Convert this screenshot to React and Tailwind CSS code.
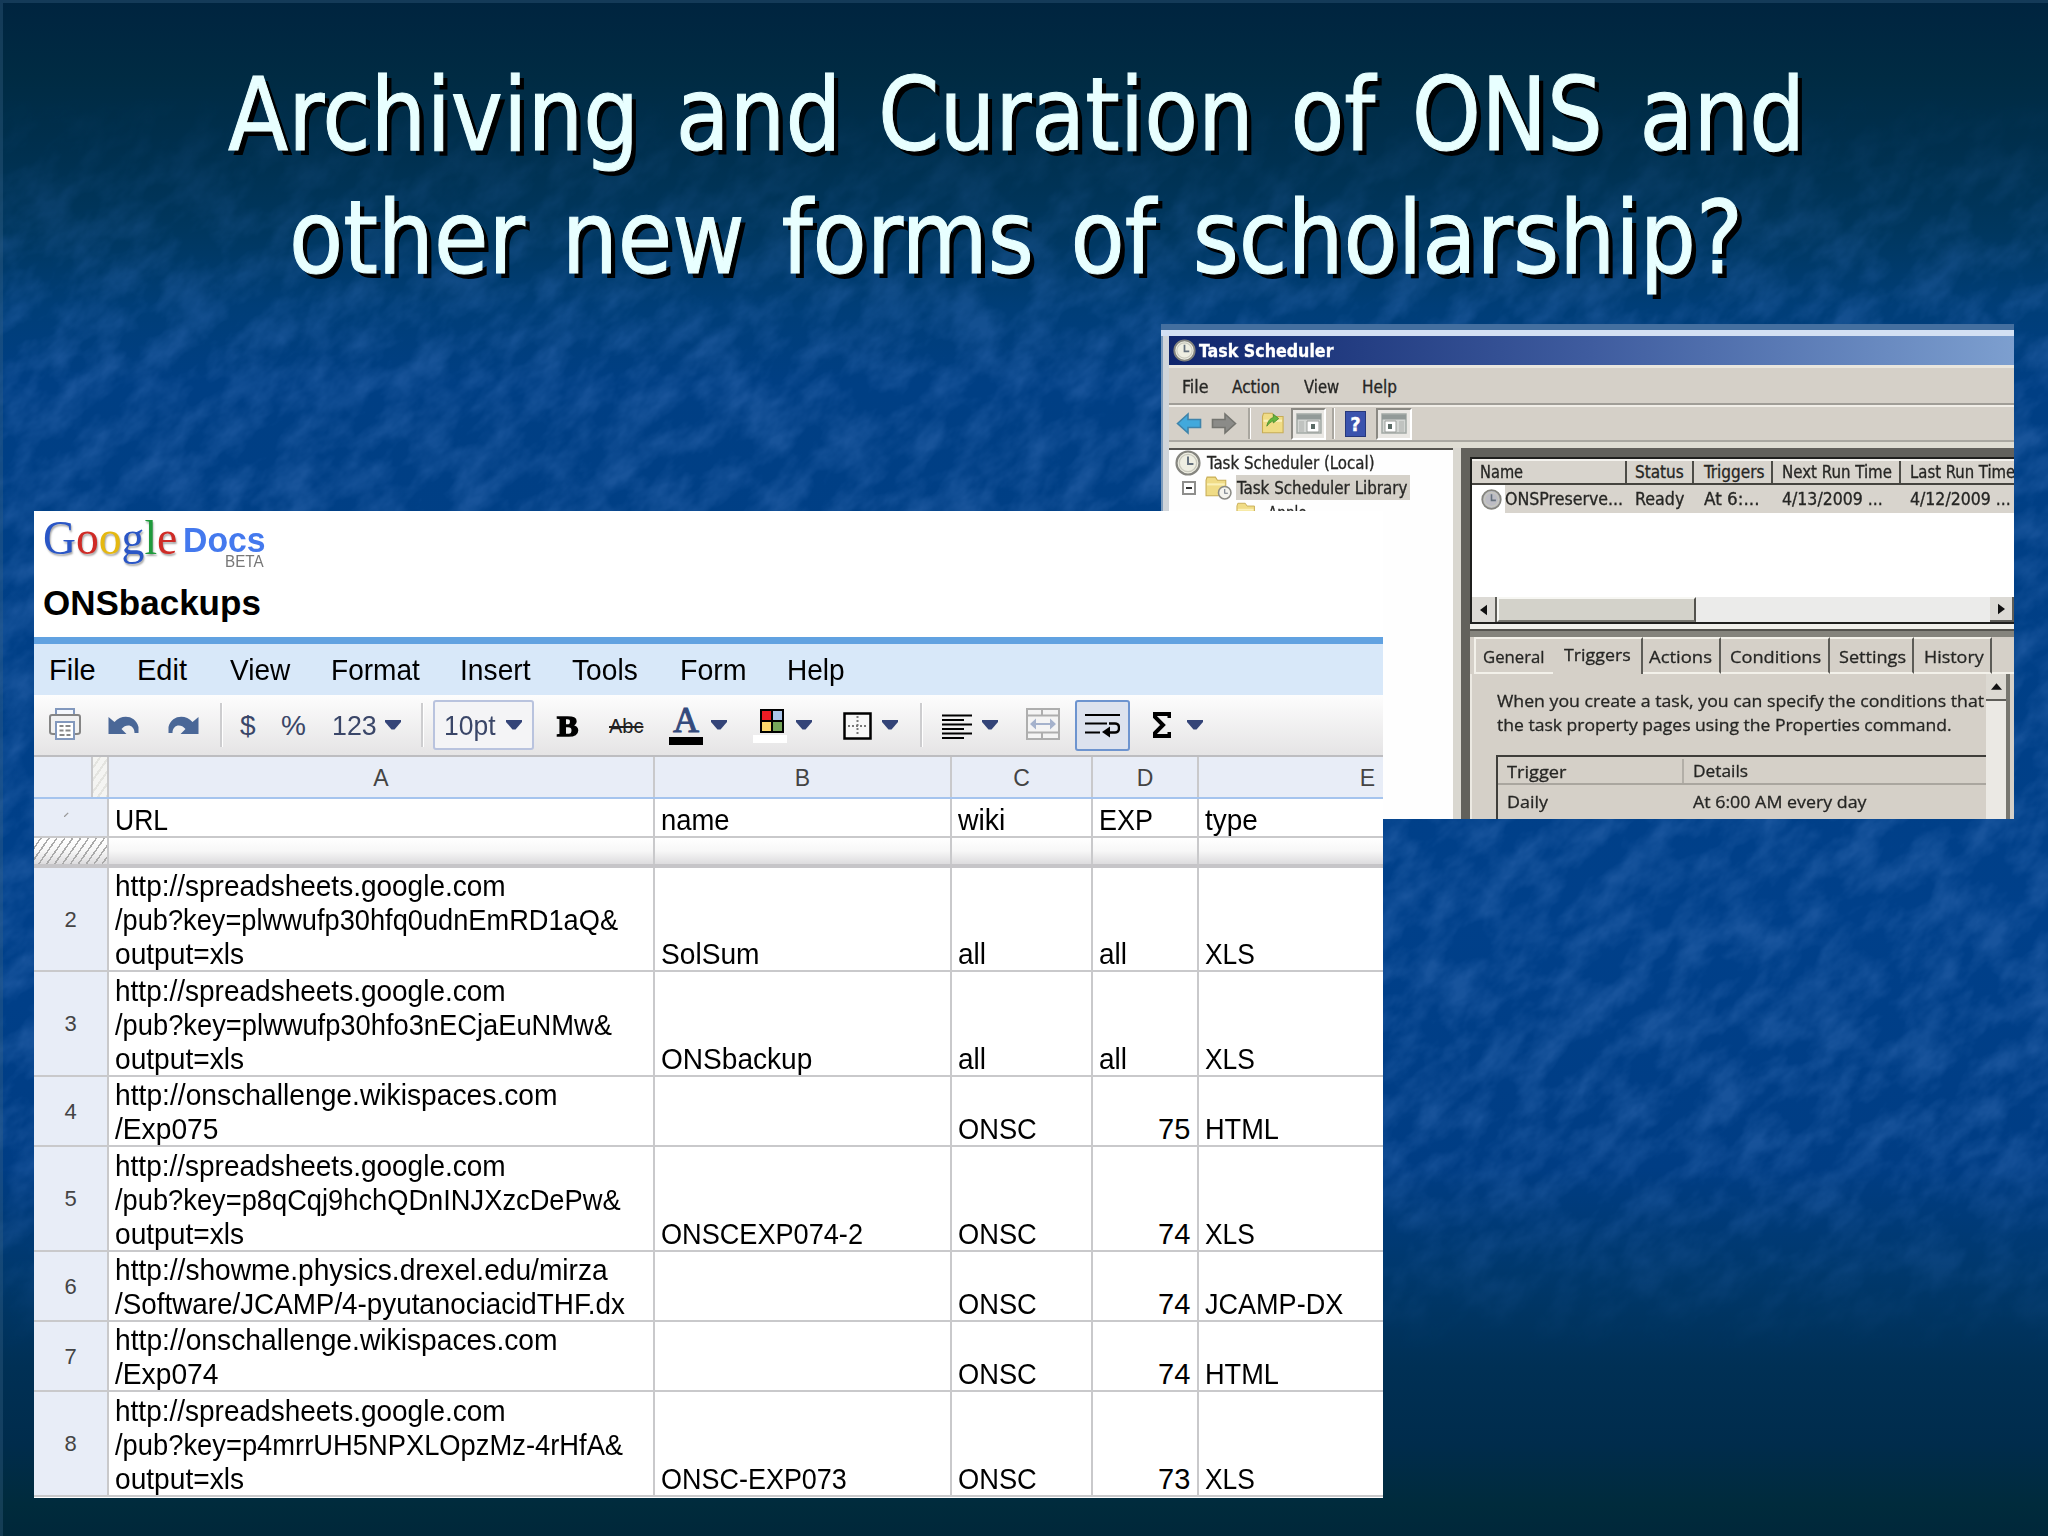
import React, { useState, useRef, useLayoutEffect } from 'react';

// Stretches one line of text to an exact width
const Fit = ({ w, className = '', children }) => {
    const ref = useRef(null);
    const [scale, setScale] = useState(1);

    useLayoutEffect(() => {
        const natural = ref.current.offsetWidth;
        if (natural > 0) setScale(w / natural);
    }, [w]);

    return (
        <span className="block shrink-0 whitespace-nowrap" style={{ width: w }}>
            <span ref={ref} className={`inline-block origin-left whitespace-pre ${className}`} style={{ transform: `scaleX(${scale})` }}>
                {children}
            </span>
        </span>
    );
};

const Water = () => (
    <svg className="absolute inset-0 w-full h-full" viewBox="0 0 2048 1536" preserveAspectRatio="none">
        <defs>
            <linearGradient id="depth" x1="0" y1="0" x2="0" y2="1">
                <stop offset="0" stopColor="#00243f" />
                <stop offset="0.05" stopColor="#002b43" />
                <stop offset="0.1" stopColor="#00304f" />
                <stop offset="0.15" stopColor="#00375f" />
                <stop offset="0.2" stopColor="#003e78" />
                <stop offset="0.25" stopColor="#003f84" />
                <stop offset="0.6" stopColor="#00408a" />
                <stop offset="0.76" stopColor="#003d84" />
                <stop offset="0.83" stopColor="#00386c" />
                <stop offset="0.89" stopColor="#003055" />
                <stop offset="0.94" stopColor="#002c4c" />
                <stop offset="0.98" stopColor="#002b3c" />
                <stop offset="1" stopColor="#00273a" />
            </linearGradient>
            <linearGradient id="fade" x1="0" y1="0" x2="0" y2="1">
                <stop offset="0.06" stopColor="#000" />
                <stop offset="0.24" stopColor="#fff" />
                <stop offset="0.74" stopColor="#fff" />
                <stop offset="0.88" stopColor="#000" />
            </linearGradient>
            <mask id="fadeMask">
                <rect width="2048" height="1536" fill="url(#fade)" />
            </mask>
            <filter id="ripple" x="0" y="0" width="100%" height="100%" colorInterpolationFilters="sRGB">
                <feTurbulence type="fractalNoise" baseFrequency="0.023 0.038" numOctaves="4" seed="11" />
                <feColorMatrix values="0 0 0 0 0.2  0 0 0 0 0.42  0 0 0 0 0.7  2.2 0 0 0 -0.78" />
            </filter>
        </defs>
        <rect width="2048" height="1536" fill="url(#depth)" />
        <g mask="url(#fadeMask)" opacity="0.48">
            <g transform="rotate(-42 1024 768)">
                <rect x="-400" y="-500" width="2850" height="2550" filter="url(#ripple)" />
            </g>
        </g>
        <path d="M0 1.5H2048M1.5 0V1536" stroke="#3a6488" strokeOpacity="0.35" strokeWidth="3" />
    </svg>
);

const Clock = ({ className, face = '#eeeee2' }) => (
    <svg viewBox="0 0 24 24" className={`shrink-0 ${className}`}>
        <circle cx="12" cy="12" r="10.6" fill={face} stroke="#85857f" strokeWidth="2" />
        <circle cx="12" cy="12" r="8" fill="none" stroke="#c9c9bd" strokeWidth="1.2" />
        <path d="M12 6v7h5" fill="none" stroke="#64707c" strokeWidth="1.8" />
    </svg>
);

const Folder = ({ className, children }) => (
    <svg viewBox="0 0 26 24" className={`shrink-0 ${className}`}>
        <path d="M1 5l1-3h8l2 3h8v15H1z" fill="#f0dc86" stroke="#c8ad55" />
        <path d="M2 9h17" stroke="#fbf1b8" strokeWidth="2" />
        {children}
    </svg>
);

const Arrow = ({ className, fill, stroke }) => (
    <svg viewBox="0 0 26 22" className={`shrink-0 ${className}`}>
        <path d="M1.5 11L12 1.5V7h12.500v8H12v5.500z" fill={fill} stroke={stroke} strokeWidth="1.6" />
    </svg>
);

// Window thumbnail used by the two toggled toolbar buttons
const PaneIcon = ({ flip }) => (
    <svg viewBox="0 0 26 21" className="w-[26px] h-[21px]">
        <path d="M1 1h24v19H1z" fill="#d3d6d3" stroke="#a3a9a5" strokeWidth="1.5" />
        <path d="M1 4h24" stroke="#929a98" strokeWidth="5" />
        <path d={flip ? 'M18 8h5v11h-5z' : 'M3 8h5v11H3z'} fill="#c0c3c0" />
        <path d={flip ? 'M4 8h11v11H4z' : 'M11 8h12v11H11z'} fill="#fff" stroke="#9a9e9a" />
        <path d={flip ? 'M7 11h4v5H7z' : 'M15 11h4v5h-4z'} fill="#5b6b66" />
    </svg>
);

const taskMenu = [
    { label: 'File', w: 26, cls: 'w-[50px]' },
    { label: 'Action', w: 48, cls: 'w-[72px]' },
    { label: 'View', w: 35, cls: 'w-[58px]' },
    { label: 'Help', w: 35, cls: 'w-[60px]' },
];

const taskCols = [
    { head: 'Name', hw: 43, cell: 'ONSPreserve...', cw: 118, cls: 'w-[155px] pl-[8px]' },
    { head: 'Status', hw: 49, cell: 'Ready', cw: 49, cls: 'w-[67px] pl-[8px]' },
    { head: 'Triggers', hw: 60, cell: 'At 6:...', cw: 55, cls: 'w-[79px] pl-[10px]' },
    { head: 'Next Run Time', hw: 110, cell: '4/13/2009 ...', cw: 101, cls: 'w-[128px] pl-[9px]' },
    { head: 'Last Run Time', hw: 105, cell: '4/12/2009 ...', cw: 101, cls: 'w-[128px] pl-[9px]' },
];

const tabs = [
    { label: 'General', w: 62, cls: 'w-[79px] pl-[7px] border-l-2 border-l-[#f3f1ea]' },
    { label: 'Triggers', w: 67, cls: 'w-[90px] pl-[11px] pb-[6px] border-r-2 border-r-[#5c5b56]', active: true },
    { label: 'Actions', w: 63, cls: 'w-[78px] pl-[6px] border-r-2 border-r-[#5c5b56]' },
    { label: 'Conditions', w: 91, cls: 'w-[109px] pl-[9px] border-r-2 border-r-[#5c5b56]' },
    { label: 'Settings', w: 67, cls: 'w-[84px] pl-[9px] border-r-2 border-r-[#5c5b56]' },
    { label: 'History', w: 60, cls: 'w-[78px] pl-[10px] border-r-2 border-r-[#5c5b56]' },
];

const TaskScheduler = () => (
    <div className="absolute left-[1161px] top-[324px] w-[853px] h-[495px] overflow-hidden flex flex-col bg-[#d5d0c8] text-[17px] leading-[22px] text-[#262624] font-['DejaVu_Sans_Condensed','DejaVu_Sans',sans-serif] [-webkit-text-stroke:0.3px_currentColor]">
        <div className="h-[6px] shrink-0 bg-[#446f9f]" />
        <div className="h-[6px] shrink-0 bg-[#d3e0f3]" />
        <div className="flex-1 flex min-h-0">
            <div className="w-[8px] shrink-0 bg-[#d0d5da] border-l-2 border-[#7f9dbd]" />
            <div className="w-[845px] shrink-0 flex flex-col">
                {/* Title bar */}
                <div className="h-[29px] shrink-0 flex items-center pl-[4px] bg-gradient-to-r from-[#10256c] via-[#3f5c9f] to-[#7d9fcf] text-white">
                    <Clock className="w-[23px] h-[23px]" />
                    <Fit w={135} className="ml-[3px] font-bold">Task Scheduler</Fit>
                </div>
                <div className="h-[3px] shrink-0 bg-[#e9e6de]" />
                <div className="h-[35px] shrink-0 flex items-center pl-[13px] pt-[2px]">
                    {taskMenu.map((m) => (
                        <div key={m.label} className={m.cls}><Fit w={m.w}>{m.label}</Fit></div>
                    ))}
                </div>
                <div className="h-[2px] shrink-0 bg-[#a09d97]" />
                <div className="h-[2px] shrink-0 bg-[#f1eee8]" />
                {/* Icon bar */}
                <div className="h-[33px] shrink-0 flex items-center pl-[7px]">
                    <Arrow className="w-[26px] h-[23px]" fill="#42a9dc" stroke="#3f84ab" />
                    <Arrow className="w-[26px] h-[23px] ml-[9px] -scale-x-100" fill="#8b8b88" stroke="#74746f" />
                    <div className="ml-[11px] w-[3px] h-[31px] bg-[#a9a69f] border-r border-white" />
                    <Folder className="w-[29px] h-[26px] ml-[10px]">
                        <path d="M5 14c1-5 3-7 6-8V3l5 4-5 4V9c-2 1-4 2-6 5z" fill="#64b53c" stroke="#4b8b2d" strokeWidth="0.8" />
                    </Folder>
                    <div className="ml-px w-[35px] h-[32px] flex items-center justify-center bg-[#eae8e4] border-2 border-t-[#8b8983] border-l-[#8b8983] border-b-white border-r-white">
                        <PaneIcon />
                    </div>
                    <div className="ml-[6px] w-[3px] h-[31px] bg-[#a9a69f] border-r border-white" />
                    <div className="ml-[10px] w-[21px] h-[26px] flex items-center justify-center bg-[#3b53ad] border border-[#27387b] text-white font-bold text-[20px]">?</div>
                    <div className="ml-[10px] w-[36px] h-[32px] flex items-center justify-center bg-[#eae8e4] border-2 border-t-[#8b8983] border-l-[#8b8983] border-b-white border-r-white">
                        <PaneIcon flip />
                    </div>
                </div>
                <div className="h-[2px] shrink-0 bg-[#aaa8a1]" />
                <div className="h-[6px] shrink-0 bg-[#dfddd3]" />

                <div className="flex-1 flex min-h-0">
                    {/* Task tree */}
                    <div className="w-[284px] shrink-0 bg-[#fefefe] border-t-2 border-[#55544f] overflow-hidden">
                        <div className="h-[25px] flex items-center pl-[6px]">
                            <Clock className="w-[26px] h-[26px]" />
                            <Fit w={168} className="ml-[6px]">Task Scheduler (Local)</Fit>
                        </div>
                        <div className="h-[25px] flex items-center pl-[13px]">
                            <div className="w-[14px] h-[14px] border-2 border-[#8e8e8c] flex items-center justify-center">
                                <div className="w-[6px] h-[2px] bg-[#333]" />
                            </div>
                            <Folder className="ml-[9px] w-[27px] h-[25px]">
                                <circle cx="19" cy="17" r="6" fill="#f4f4ee" stroke="#8a8a84" strokeWidth="1.5" />
                                <path d="M19 13.500V17.500h3" fill="none" stroke="#6b7480" />
                            </Folder>
                            <div className="ml-[4px] w-[174px] h-[25px] bg-[#d5d1c9] flex items-center">
                                <Fit w={170} className="ml-px">Task Scheduler Library</Fit>
                            </div>
                        </div>
                        <div className="h-[25px] flex items-center pl-[67px]">
                            <Folder className="w-[24px] h-[23px]" />
                            <Fit w={39} className="ml-[8px]">Apple</Fit>
                        </div>
                    </div>
                    <div className="w-[8px] shrink-0 bg-[#d9d7d0]" />
                    <div className="w-[9px] shrink-0 bg-[#62615c]" />

                    <div className="w-[544px] shrink-0 flex flex-col">
                        <div className="h-[11px] shrink-0 bg-[#62615c] border-b-2 border-[#1f1f1d]" />
                        {/* Task list */}
                        <div className="h-[165px] shrink-0 bg-white border-l-2 border-b-2 border-[#1f1f1d] flex flex-col">
                            <div className="h-[26px] shrink-0 flex bg-[#d8d4cd] border-t-2 border-t-[#f4f2ee] border-b-2 border-b-[#45443f]">
                                {taskCols.map((c) => (
                                    <div key={c.head} className={`shrink-0 border-r-2 border-[#4d4c47] ${c.cls}`}>
                                        <Fit w={c.hw}>{c.head}</Fit>
                                    </div>
                                ))}
                            </div>
                            <div className="h-[28px] shrink-0 flex items-center bg-[#d8d4cd]">
                                {taskCols.map((c, i) => (
                                    <div key={c.head} className={`h-full shrink-0 flex items-center ${i === 0 ? 'w-[155px]' : c.cls}`}>
                                        {i === 0 && (
                                            <div className="w-[33px] h-full bg-white flex items-center pl-[9px]">
                                                <Clock className="w-[21px] h-[21px]" face="#bcbcc4" />
                                            </div>
                                        )}
                                        <Fit w={c.cw}>{c.cell}</Fit>
                                    </div>
                                ))}
                            </div>
                            <div className="flex-1" />
                            <div className="h-[25px] shrink-0 flex bg-[#ebebea]">
                                <div className="w-[25px] shrink-0 flex items-center justify-center bg-[#dcdad5] border-r-2 border-[#5e5d58]">
                                    <svg viewBox="0 0 8 12" className="w-[7px] h-[12px]"><path d="M8 0v12L0 6z" fill="#111" /></svg>
                                </div>
                                <div className="w-[199px] shrink-0 bg-[#d3d2ca] border-2 border-l-[#f7f7f3] border-t-[#f7f7f3] border-r-[#53524d] border-b-[#77766f]" />
                                <div className="flex-1" />
                                <div className="w-[24px] shrink-0 flex items-center justify-center bg-[#dcdad5] border-r-2 border-b-2 border-[#5e5d58]">
                                    <svg viewBox="0 0 8 12" className="w-[7px] h-[12px]"><path d="M0 0v12l8-6z" fill="#111" /></svg>
                                </div>
                            </div>
                        </div>
                        <div className="h-[5px] shrink-0 bg-[#f1f0eb]" />
                        <div className="h-[8px] shrink-0 bg-[#85847d] border-t-2 border-[#55544f]" />
                        {/* Tabs */}
                        <div className="h-[37px] shrink-0 pl-[4px] flex font-['Open_Sans','Noto_Sans',sans-serif]">
                            {tabs.map((t) => (
                                <div key={t.label} className={`shrink-0 flex items-center pt-[3px] border-t-2 border-t-[#f3f1ea] ${t.cls} ${t.active ? '' : 'border-b-2 border-b-[#f3f1ea]'}`}>
                                    <Fit w={t.w}>{t.label}</Fit>
                                </div>
                            ))}
                            <div className="flex-1 border-b-2 border-[#f3f1ea]" />
                        </div>
                        <div className="flex-1 flex min-h-0 border-l-2 border-[#ece9e2] font-['Open_Sans','Noto_Sans',sans-serif]">
                            <div className="w-[514px] shrink-0 pl-[24px] pt-[15px] overflow-hidden">
                                <Fit w={487} className="ml-px leading-[24px]">When you create a task, you can specify the conditions that</Fit>
                                <Fit w={455} className="ml-px leading-[24px]">the task property pages using the Properties command.</Fit>
                                <div className="mt-[18px] h-[80px] border-t-2 border-l-2 border-[#3f3e3a]">
                                    <div className="h-[28px] flex items-center pt-[2px] border-b-2 border-[#aaa69f]">
                                        <div className="w-[186px] h-[24px] pl-[9px] border-r-2 border-[#b2aea7]"><Fit w={60} className="leading-[25px]">Trigger</Fit></div>
                                        <Fit w={55} className="ml-[9px]">Details</Fit>
                                    </div>
                                    <div className="h-[32px] flex items-center pt-[2px] pl-[9px]">
                                        <div className="w-[186px]"><Fit w={41}>Daily</Fit></div>
                                        <Fit w={174}>At 6:00 AM every day</Fit>
                                    </div>
                                </div>
                            </div>
                            <div className="w-[24px] shrink-0 bg-[#ebe9e4] border-r-4 border-[#77766f]">
                                <div className="h-[27px] flex items-center justify-center bg-[#dcd9d2] border-b-2 border-[#5e5d58]">
                                    <svg viewBox="0 0 12 7" className="w-[11px] h-[7px]"><path d="M0 7h12L6 0z" fill="#111" /></svg>
                                </div>
                            </div>
                        </div>
                    </div>
                </div>
            </div>
        </div>
    </div>
);

const docsMenu = [
    { label: 'File', w: 47, cls: 'w-[88px]' },
    { label: 'Edit', w: 50, cls: 'w-[93px]' },
    { label: 'View', w: 60, cls: 'w-[101px]' },
    { label: 'Format', w: 89, cls: 'w-[129px]' },
    { label: 'Insert', w: 71, cls: 'w-[112px]' },
    { label: 'Tools', w: 66, cls: 'w-[108px]' },
    { label: 'Form', w: 67, cls: 'w-[107px]' },
    { label: 'Help', w: 58, cls: 'w-[80px]' },
];

const Caret = ({ className }) => (
    <svg viewBox="0 0 16 10" className={`shrink-0 w-[16px] h-[10px] ${className}`}>
        <path d="M0 0h16v2L9.500 9.500h-3L0 2z" fill="#344478" />
    </svg>
);

const Divider = ({ className }) => (
    <div className={`shrink-0 w-[3px] h-[44px] bg-[#cdcdcf] border-r border-white ${className}`} />
);

const Undo = ({ className }) => (
    <svg viewBox="0 0 30 19" className={`shrink-0 w-[31px] h-[19px] ${className}`}>
        <path d="M0 1l6 5c7-8 21-7 24 5v6h-4c0-8-8-10-13-4l5 5H0z" fill="#4a6797" />
    </svg>
);

const DocsToolbar = () => (
    <div className="h-[60px] shrink-0 flex items-center bg-gradient-to-b from-[#fdfdfd] to-[#e5e4e5] text-[28px] leading-[34px] text-[#3a4668]">
        <svg viewBox="0 0 32 32" className="shrink-0 ml-[15px] mb-[2px] w-[32px] h-[32px]">
            <path d="M7 8V1h18v7" fill="#f5f8fd" stroke="#8298bd" strokeWidth="2" />
            <path d="M1 9q0-2 2-2h26q2 0 2 2v15q0 2-3 2H4q-3 0-3-2z" fill="#f1f1f1" stroke="#858585" strokeWidth="2" />
            <path d="M7 14h18v17H7z" fill="#fff" stroke="#8298bd" strokeWidth="2" />
            <path d="M10.500 18h4m2 0h5M10.500 22.500h4m2 0h5M10.500 27h5m2 0h4" stroke="#888" strokeWidth="2" />
        </svg>
        <Undo className="ml-[27px]" />
        <Undo className="ml-[29px] -scale-x-100" />
        <Divider className="ml-[21px]" />
        <div className="w-[17px] shrink-0" />
        <Fit w={16} className="mt-[2px]">$</Fit>
        <div className="w-[25px] shrink-0" />
        <Fit w={25} className="mt-[2px]">%</Fit>
        <div className="w-[26px] shrink-0" />
        <Fit w={45} className="mt-[2px]">123</Fit>
        <Caret className="ml-[8px]" />
        <Divider className="ml-[20px]" />
        <div className="shrink-0 ml-[9px] w-[101px] h-[50px] flex items-center pl-[9px] rounded-[3px] border-2 border-[#b9c3de] bg-[#f4f4f6]">
            <Fit w={52} className="mt-[2px]">10pt</Fit>
            <Caret className="ml-[10px]" />
        </div>
        <div className="w-[23px] shrink-0" />
        <Fit w={21} className="mt-[2px] font-['Liberation_Serif',serif] font-bold text-[29px] text-black [-webkit-text-stroke:1.5px_black]">B</Fit>
        <div className="w-[31px] shrink-0" />
        <Fit w={34} className="mt-[2px] text-[20px] text-[#222] line-through decoration-2">Abc</Fit>
        <div className="shrink-0 ml-[26px] w-[34px] h-[42px] flex flex-col items-center">
            <span className="h-[33px] leading-[33px] text-[36px] font-['Liberation_Serif',serif] text-[#344a7c] [-webkit-text-stroke:1px_#344a7c]">A</span>
            <div className="w-[34px] h-[8px] bg-black" />
        </div>
        <Caret className="ml-[8px]" />
        <svg viewBox="0 0 34 34" className="shrink-0 ml-[26px] w-[34px] h-[34px] mt-[2px]">
            <path d="M7 0h24v24H7z" fill="#000" />
            <path d="M9 2h9v9H9z" fill="#ee1c24" />
            <path d="M20 2h9v9h-9z" fill="#abc6ea" />
            <path d="M9 13h9v9H9z" fill="#fdd96b" />
            <path d="M20 13h9v9h-9z" fill="#76a65a" />
            <path d="M0 26h34v8H0z" fill="#fff" />
        </svg>
        <Caret className="ml-[9px]" />
        <svg viewBox="0 0 29 28" className="shrink-0 ml-[31px] w-[29px] h-[28px] mt-[2px]">
            <path d="M1.500 1.500h26v25h-26z" fill="#f8f8f8" stroke="#000" strokeWidth="2.500" />
            <path d="M14.500 4v20M5 14h20" stroke="#777" strokeWidth="2" strokeDasharray="2 2" />
        </svg>
        <Caret className="ml-[10px]" />
        <Divider className="ml-[22px]" />
        <svg viewBox="0 0 30 25" className="shrink-0 ml-[19px] w-[30px] h-[25px] mt-[2px]">
            <path d="M0 1.500h30M0 6h22M0 10.500h30M0 15h22M0 19.500h30M0 24h22" stroke="#000" strokeWidth="2.200" />
        </svg>
        <Caret className="ml-[10px]" />
        <svg viewBox="0 0 34 32" className="shrink-0 ml-[28px] w-[34px] h-[32px] mb-[2px]">
            <path d="M1 1h32v30H1zM1 7.500h32M1 24.500h32M16 1v6.500M16 24.500V31" fill="#f4f4f4" stroke="#aeaeae" strokeWidth="2" />
            <path d="M9 16h16" stroke="#a5b2cc" strokeWidth="2" />
            <path d="M10 10.500v11L4 16zM24 10.500v11l6-5.500z" fill="#a5b2cc" />
        </svg>
        <div className="shrink-0 ml-[15px] w-[55px] h-[51px] flex items-center justify-center rounded-[3px] border-2 border-[#6d94cf] bg-[#dce2ee]">
            <svg viewBox="0 0 35 25" className="w-[35px] h-[25px]">
                <path d="M0 2h35M0 10.500h22M0 19.500h15" stroke="#000" strokeWidth="2.200" />
                <path d="M24 10.500h6q4 0 4 4.500t-4 4.500h-7" fill="none" stroke="#000" strokeWidth="2.400" />
                <path d="M25 13.500v11l-8-5.500z" fill="#000" />
            </svg>
        </div>
        <svg viewBox="0 0 18 26" className="shrink-0 ml-[23px] w-[18px] h-[26px]">
            <path d="M16.500 6V2H2v3l8 8-8 8v3h14.500v-4" fill="none" stroke="#000" strokeWidth="4" />
        </svg>
        <Caret className="ml-[16px]" />
    </div>
);

const rows = [
    { n: 2, h: 'h-[104px]', url: [['http://spreadsheets.google.com', 391], ['/pub?key=plwwufp30hfq0udnEmRD1aQ&', 503], ['output=xls', 129]], name: ['SolSum', 99], wiki: ['all', 28], exp: ['all', 28], type: ['XLS', 50] },
    { n: 3, h: 'h-[105px]', url: [['http://spreadsheets.google.com', 391], ['/pub?key=plwwufp30hfo3nECjaEuNMw&', 497], ['output=xls', 129]], name: ['ONSbackup', 151], wiki: ['all', 28], exp: ['all', 28], type: ['XLS', 50] },
    { n: 4, h: 'h-[70px]', url: [['http://onschallenge.wikispaces.com', 443], ['/Exp075', 103]], wiki: ['ONSC', 79], exp: ['75', 32], type: ['HTML', 74] },
    { n: 5, h: 'h-[105px]', url: [['http://spreadsheets.google.com', 391], ['/pub?key=p8qCqj9hchQDnINJXzcDePw&', 506], ['output=xls', 129]], name: ['ONSCEXP074-2', 202], wiki: ['ONSC', 79], exp: ['74', 32], type: ['XLS', 50] },
    { n: 6, h: 'h-[70px]', url: [['http://showme.physics.drexel.edu/mirza', 493], ['/Software/JCAMP/4-pyutanociacidTHF.dx', 510]], wiki: ['ONSC', 79], exp: ['74', 32], type: ['JCAMP-DX', 138] },
    { n: 7, h: 'h-[70px]', url: [['http://onschallenge.wikispaces.com', 443], ['/Exp074', 103]], wiki: ['ONSC', 79], exp: ['74', 32], type: ['HTML', 74] },
    { n: 8, h: 'h-[105px]', url: [['http://spreadsheets.google.com', 391], ['/pub?key=p4mrrUH5NPXLOpzMz-4rHfA&', 508], ['output=xls', 129]], name: ['ONSC-EXP073', 186], wiki: ['ONSC', 79], exp: ['73', 32], type: ['XLS', 50] },
];

const colWidths = ['w-[546px]', 'w-[297px]', 'w-[141px]', 'w-[106px]', 'w-[339px]'];

const Cell = ({ col, value, right }) => (
    <div className={`shrink-0 flex items-end pl-[6px] pr-[7px] -mb-px border-r-2 border-[#c9c9cb] ${colWidths[col]} ${right ? 'justify-end' : ''}`}>
        {value && <Fit w={value[1]}>{value[0]}</Fit>}
    </div>
);

const GoogleDocs = () => (
    <div className="absolute left-[34px] top-[511px] w-[1349px] h-[987px] overflow-hidden flex flex-col bg-white text-black text-[29px] leading-[34px] font-['Liberation_Sans',Arial,sans-serif]">
        <div className="h-[126px] shrink-0 pl-[9px]">
            <div className="flex items-start h-[70px] pt-[3px]">
                <Fit w={134} className="font-['Liberation_Serif',serif] text-[48px] leading-[48px] [text-shadow:1px_2px_2px_rgba(0,0,0,0.35)]">
                    <span className="text-[#2a56c6]">G</span>
                    <span className="text-[#cf2b26]">o</span>
                    <span className="text-[#e5b811]">o</span>
                    <span className="text-[#2a56c6]">g</span>
                    <span className="text-[#1f9a3c]">l</span>
                    <span className="text-[#cf2b26]">e</span>
                </Fit>
                <div className="ml-[6px] flex flex-col items-end">
                    <Fit w={83} className="text-[35px] leading-[40px] mt-[6px] font-bold text-[#4479ee]">Docs</Fit>
                    <Fit w={39} className="-ml-[2px] text-[16px] leading-[4px] text-[#777] align-top">BETA</Fit>
                </div>
            </div>
            <Fit w={218} className="font-bold text-[35px] leading-[44px]">ONSbackups</Fit>
        </div>
        <div className="h-[7px] shrink-0 bg-[#61a2e1]" />
        <div className="h-[51px] shrink-0 flex items-center pl-[15px] bg-[#d8e8f9]">
            {docsMenu.map((m) => (
                <div key={m.label} className={`shrink-0 ${m.cls}`}><Fit w={m.w}>{m.label}</Fit></div>
            ))}
        </div>
        <DocsToolbar />

        {/* Column letters */}
        <div className="h-[44px] shrink-0 flex border-t-2 border-t-[#bdbdc0] border-b-2 border-b-[#a5c4ee] bg-[#e8edf7] text-[23px] text-[#444]">
            <div className="w-[75px] shrink-0 flex justify-end border-r-2 border-[#c9c9cb]">
                <div className="w-[16px] border-l-2 border-[#c9c9cb] bg-[repeating-linear-gradient(125deg,#f4f4f2_0_5px,#e4e4e0_5px_7px)]" />
            </div>
            {['A', 'B', 'C', 'D', 'E'].map((l, i) => (
                <div key={l} className={`shrink-0 flex items-center justify-center pt-[2px] border-r-2 border-[#c9c9cb] ${colWidths[i]}`}>{l}</div>
            ))}
        </div>
        <div className="h-[39px] shrink-0 flex border-b-2 border-[#c9c9cb]">
            <div className="w-[75px] shrink-0 flex items-center justify-center bg-[#e8edf7] border-r-2 border-[#c9c9cb]">
                <svg viewBox="0 0 6 6" className="w-[5px] h-[5px] mb-[6px] ml-[-8px]"><path d="M0 6L5 1" stroke="#999" strokeWidth="1.500" /></svg>
            </div>
            <Cell col={0} value={['URL', 53]} />
            <Cell col={1} value={['name', 69]} />
            <Cell col={2} value={['wiki', 47]} />
            <Cell col={3} value={['EXP', 54]} />
            <Cell col={4} value={['type', 53]} />
        </div>
        {/* Frozen row handle */}
        <div className="h-[30px] shrink-0 flex border-b-4 border-[#c6c5c8] bg-gradient-to-b from-white via-[#f7f7f7] to-[#dddcde]">
            <div className="w-[75px] shrink-0 border-r-2 border-[#c9c9cb] bg-[repeating-linear-gradient(125deg,transparent_0_5px,#aaa_5px_6.500px)]" />
            {colWidths.map((w) => (
                <div key={w} className={`shrink-0 border-r-2 border-[#c9c9cb] ${w}`} />
            ))}
        </div>
        {rows.map((r) => (
            <div key={r.n} className={`shrink-0 flex border-b-2 border-[#c9c9cb] ${r.h}`}>
                <div className="w-[75px] shrink-0 flex items-center justify-center pt-px bg-[#e8edf7] border-r-2 border-[#c9c9cb] text-[22px] text-[#444]">{r.n}</div>
                <div className="w-[546px] shrink-0 flex flex-col justify-end pl-[6px] -mb-px border-r-2 border-[#c9c9cb]">
                    {r.url.map(([text, w]) => (
                        <Fit key={text} w={w}>{text}</Fit>
                    ))}
                </div>
                <Cell col={1} value={r.name} />
                <Cell col={2} value={r.wiki} />
                <Cell col={3} value={r.exp} right={r.exp[0] !== 'all'} />
                <Cell col={4} value={r.type} />
            </div>
        ))}
    </div>
);

const App = () => (
    <div className="relative w-[2048px] h-[1536px] overflow-hidden bg-[#00408a]">
        <Water />
        <h1 className="relative pt-[53px] flex flex-col text-[102px] leading-[123px] text-[#e8ffff] [word-spacing:9px] [text-shadow:5px_5px_0_#000] [-webkit-text-stroke:1px_#e8ffff] font-['DejaVu_Sans_Condensed','DejaVu_Sans',sans-serif]">
            <span className="pl-[228px]"><Fit w={1577}>Archiving and Curation of ONS and</Fit></span>
            <span className="pl-[289px]"><Fit w={1454}>other new forms of scholarship?</Fit></span>
        </h1>
        <TaskScheduler />
        <GoogleDocs />
    </div>
);

export default App;
